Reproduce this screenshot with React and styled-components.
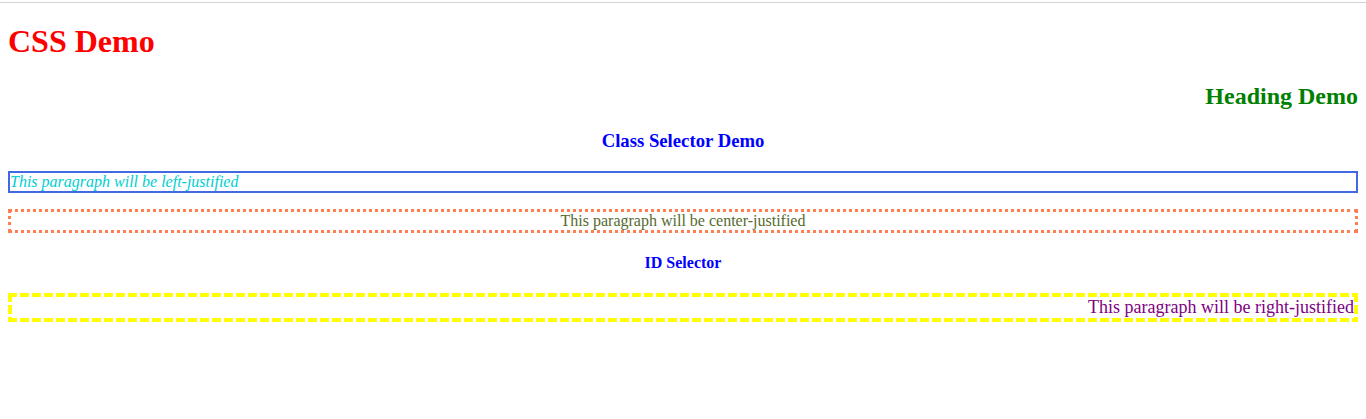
import React from "react";
import styled, { createGlobalStyle, css } from "styled-components";

const Global = createGlobalStyle`
  html, body { margin: 0; padding: 0; background: #fff; }
  body { font-family: "Liberation Serif", "Times New Roman", serif; font-size: 16px; }
`;

const TopRule = styled.div`
  height: 1px;
  margin-top: 2px;
  background: #d3d3d3;
`;

const Page = styled.main`
  padding: 0 8px 8px;
`;

const Title = styled.h1`
  color: #ff0000;
  font-size: 32px;
  font-weight: bold;
  margin: 20px 0 23px;
`;

const SubTitle = styled.h2`
  color: #008000;
  font-size: 24px;
  text-align: right;
  margin: 20px 0;
`;

const SectionHead = styled.h3`
  color: #0000ff;
  font-size: ${(p) => p.$size || "18.72px"};
  text-align: center;
  margin: ${(p) => p.$margin || "18.72px 0"};
`;

const dashGradient = (dir, color) =>
  `repeating-linear-gradient(${dir}, ${color} 0 9px, transparent 9px 12px)`;

const Para = styled.p`
  margin: 16px 0;
  text-align: ${(p) => p.$align};
  color: ${(p) => p.$color};
  font-style: ${(p) => (p.$italic ? "italic" : "normal")};
  font-size: ${(p) => p.$size || "16px"};
  border: ${(p) => p.$border || "none"};
  ${(p) =>
    p.$dash &&
    css`
      border: 4px solid transparent;
      background:
        ${dashGradient("90deg", p.$dash)} left top / 100% 4px no-repeat,
        ${dashGradient("90deg", p.$dash)} left bottom / 100% 4px no-repeat,
        ${dashGradient("180deg", p.$dash)} left top / 4px 100% no-repeat,
        ${dashGradient("180deg", p.$dash)} right top / 4px 100% no-repeat;
      background-origin: border-box;
      background-clip: border-box;
    `}
`;

export default function App() {
  return (
    <>
      <Global />
      <TopRule />
      <Page>
        <Title>CSS Demo</Title>
        <SubTitle>Heading Demo</SubTitle>
        <SectionHead>Class Selector Demo</SectionHead>
        <Para $align="left" $color="#00ced1" $italic $border="2px solid #4169e1">
          This paragraph will be left-justified
        </Para>
        <Para $align="center" $color="#556b2f" $border="3px dotted #ff7f50">
          This paragraph will be center-justified
        </Para>
        <SectionHead $size="16px" $margin="21px 0">ID Selector</SectionHead>
        <Para $align="right" $color="#800080" $size="18px" $dash="#ffff00">
          This paragraph will be right-justified
        </Para>
      </Page>
    </>
  );
}
